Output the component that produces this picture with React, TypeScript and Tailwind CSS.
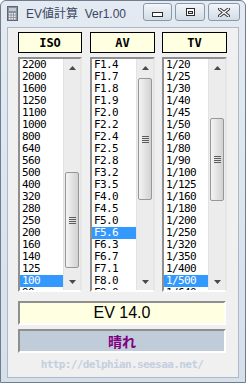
import React from "react";

const ISO = ["2200","2000","1600","1250","1100","1000","800","640","560","500","400","320","280","250","200","160","140","125","100","90"];
const AV = ["F1.4","F1.7","F1.8","F1.9","F2.0","F2.2","F2.4","F2.5","F2.8","F3.2","F3.5","F4.0","F4.5","F5.0","F5.6","F6.3","F6.7","F7.1","F8.0","F9.0"];
const TV = ["1/20","1/25","1/30","1/40","1/45","1/50","1/60","1/80","1/90","1/100","1/125","1/160","1/180","1/200","1/250","1/320","1/350","1/400","1/500","1/640"];

const mono = { fontFamily: '"DejaVu Sans Mono", "Liberation Mono", monospace' } as React.CSSProperties;

function Arrow({ up }: { up: boolean }) {
  return (
    <div className="h-[17px] flex items-center justify-center">
      <svg width="7" height="4" viewBox="0 0 7 4">
        {up ? (
          <polygon points="3.5,0 7,4 0,4" fill="#4a4a4a" />
        ) : (
          <polygon points="0,0 7,0 3.5,4" fill="#4a4a4a" />
        )}
      </svg>
    </div>
  );
}

function Thumb({ top, height }: { top: number; height: number }) {
  return (
    <div
      className="mx-[1px] rounded-[2px] border border-[#979797] bg-gradient-to-r from-[#f4f4f4] to-[#d2d2d2] flex items-center justify-center"
      style={{ marginTop: top, height }}
    >
      <div className="flex flex-col gap-[1px]">
        <div className="w-[7px] h-[1px] bg-[#5c5c5c]" />
        <div className="w-[7px] h-[1px] bg-[#5c5c5c]" />
        <div className="w-[7px] h-[1px] bg-[#5c5c5c]" />
        <div className="w-[7px] h-[1px] bg-[#5c5c5c]" />
      </div>
    </div>
  );
}

function ListBox({ items, sel, width, top, height }: { items: string[]; sel: number; width: number; top: number; height: number }) {
  return (
    <div
      className="h-[235px] flex border-2 border-t-[#8f8f8f] border-l-[#8f8f8f] border-b-[#ffffff] border-r-[#e6e6e6] bg-white"
      style={{ width }}
    >
      <div className="flex-1 overflow-hidden flex flex-col" style={mono}>
        {items.map((t, i) => (
          <div
            key={t}
            className={
              "h-[12px] shrink-0 leading-[12px] text-[11px] tracking-[-0.6px] pl-[2px] " +
              (i === sel ? "bg-[#3399ff] text-white" : "text-black")
            }
          >
            {t}
          </div>
        ))}
      </div>
      <div className="w-[17px] shrink-0 flex flex-col bg-[#ececec] border-l border-[#e2e2e2]">
        <Arrow up />
        <div className="flex-1">
          <Thumb top={top} height={height} />
        </div>
        <Arrow up={false} />
      </div>
    </div>
  );
}

function Header({ label, width }: { label: string; width: number }) {
  return (
    <div
      className="h-[21px] border border-black bg-[#ffffe1] flex items-center justify-center font-bold text-[12px] text-black"
      style={{ ...mono, width }}
    >
      {label}
    </div>
  );
}

function CapButton({ w, children }: { w: number; children: React.ReactNode }) {
  return (
    <div
      className="h-[18px] rounded-[3px] border border-[#8a97a8] bg-gradient-to-b from-[#f3f6fa] via-[#e1e8f0] to-[#d3dce7] flex items-center justify-center"
      style={{ width: w }}
    >
      {children}
    </div>
  );
}

export default function App() {
  return (
    <div className="w-[246px] h-[383px] bg-gradient-to-b from-[#e3eaf2] to-[#d6e0eb] border border-[#6f7d8e] rounded-t-[6px] flex flex-col overflow-hidden">
      <div className="h-[26px] shrink-0 flex items-center pl-[6px] pr-[5px]">
        <svg width="11" height="15" viewBox="0 0 11 15" className="mt-[-2px]">
          <rect x="0.5" y="0.5" width="10" height="14" fill="#8c939c" stroke="#5f6670" />
          <rect x="2" y="2" width="7" height="3" fill="#b9cbdd" />
          {[0, 1, 2].map((c) =>
            [0, 1, 2].map((r) => (
              <rect key={c + "-" + r} x={2 + c * 2.5} y={7 + r * 2.5} width="1.6" height="1.6" fill="#e8ecf0" />
            ))
          )}
        </svg>
        <div
          className="ml-[8px] text-[12px] text-[#3b4761] whitespace-pre leading-none"
          style={{ fontFamily: '"Liberation Sans", "Noto Sans CJK JP", sans-serif' }}
        >
          {"EV値計算  Ver1.00"}
        </div>
        <div className="flex-1" />
        <div className="flex items-center gap-[3px] mt-[-4px]">
          <CapButton w={29}>
            <svg width="11" height="5" viewBox="0 0 11 5" className="mt-[5px]">
              <rect x="0.5" y="0.5" width="10" height="4" fill="#ffffff" stroke="#2c2c2c" />
            </svg>
          </CapButton>
          <CapButton w={30}>
            <svg width="9" height="8" viewBox="0 0 9 8">
              <rect x="0.5" y="0.5" width="8" height="7" fill="#ffffff" stroke="#2c2c2c" />
              <rect x="2.5" y="3.5" width="4" height="2" fill="#dbe3ec" stroke="#2c2c2c" />
            </svg>
          </CapButton>
          <CapButton w={32}>
            <svg width="12" height="9" viewBox="0 0 12 9">
              <path d="M1.5 1 L10.5 8 M10.5 1 L1.5 8" stroke="#2c2c2c" strokeWidth="3.2" strokeLinecap="square" />
              <path d="M1.5 1 L10.5 8 M10.5 1 L1.5 8" stroke="#ffffff" strokeWidth="1.4" strokeLinecap="square" />
            </svg>
          </CapButton>
        </div>
      </div>
      <div className="flex-1 mx-[6px] mb-[4px] bg-[#f0f0f0] border border-[#aeb9c6] flex flex-col pl-[10px] pt-[4px]">
        <div className="flex">
          <Header label="ISO" width={64} />
          <div className="w-[8px]" />
          <Header label="AV" width={65} />
          <div className="w-[7px]" />
          <Header label="TV" width={65} />
        </div>
        <div className="flex mt-[4px]">
          <ListBox items={ISO} sel={18} width={64} top={96} height={96} />
          <div className="w-[8px]" />
          <ListBox items={AV} sel={14} width={65} top={2} height={122} />
          <div className="w-[7px]" />
          <ListBox items={TV} sel={18} width={65} top={42} height={83} />
        </div>
        <div
          className="mt-[9px] w-[208px] h-[24px] border-2 border-t-[#8f8f8f] border-l-[#8f8f8f] border-b-white border-r-white bg-[#ffffe1] flex items-center justify-center text-[16px] text-black"
          style={{ fontFamily: '"Liberation Sans", Arial, sans-serif' }}
        >
          EV 14.0
        </div>
        <div
          className="mt-[4px] w-[208px] h-[24px] border-2 border-t-[#8f8f8f] border-l-[#8f8f8f] border-b-white border-r-white bg-[#c0ccda] flex items-center justify-center text-[14px] font-bold text-[#800080]"
          style={{ fontFamily: '"Noto Sans CJK JP", sans-serif' }}
        >
          晴れ
        </div>
        <div
          className="w-[208px] h-[24px] flex items-center justify-center text-[11px] font-bold tracking-[-0.6px] text-[#c3cfdf]"
          style={mono}
        >
          http://delphian.seesaa.net/
        </div>
      </div>
    </div>
  );
}
